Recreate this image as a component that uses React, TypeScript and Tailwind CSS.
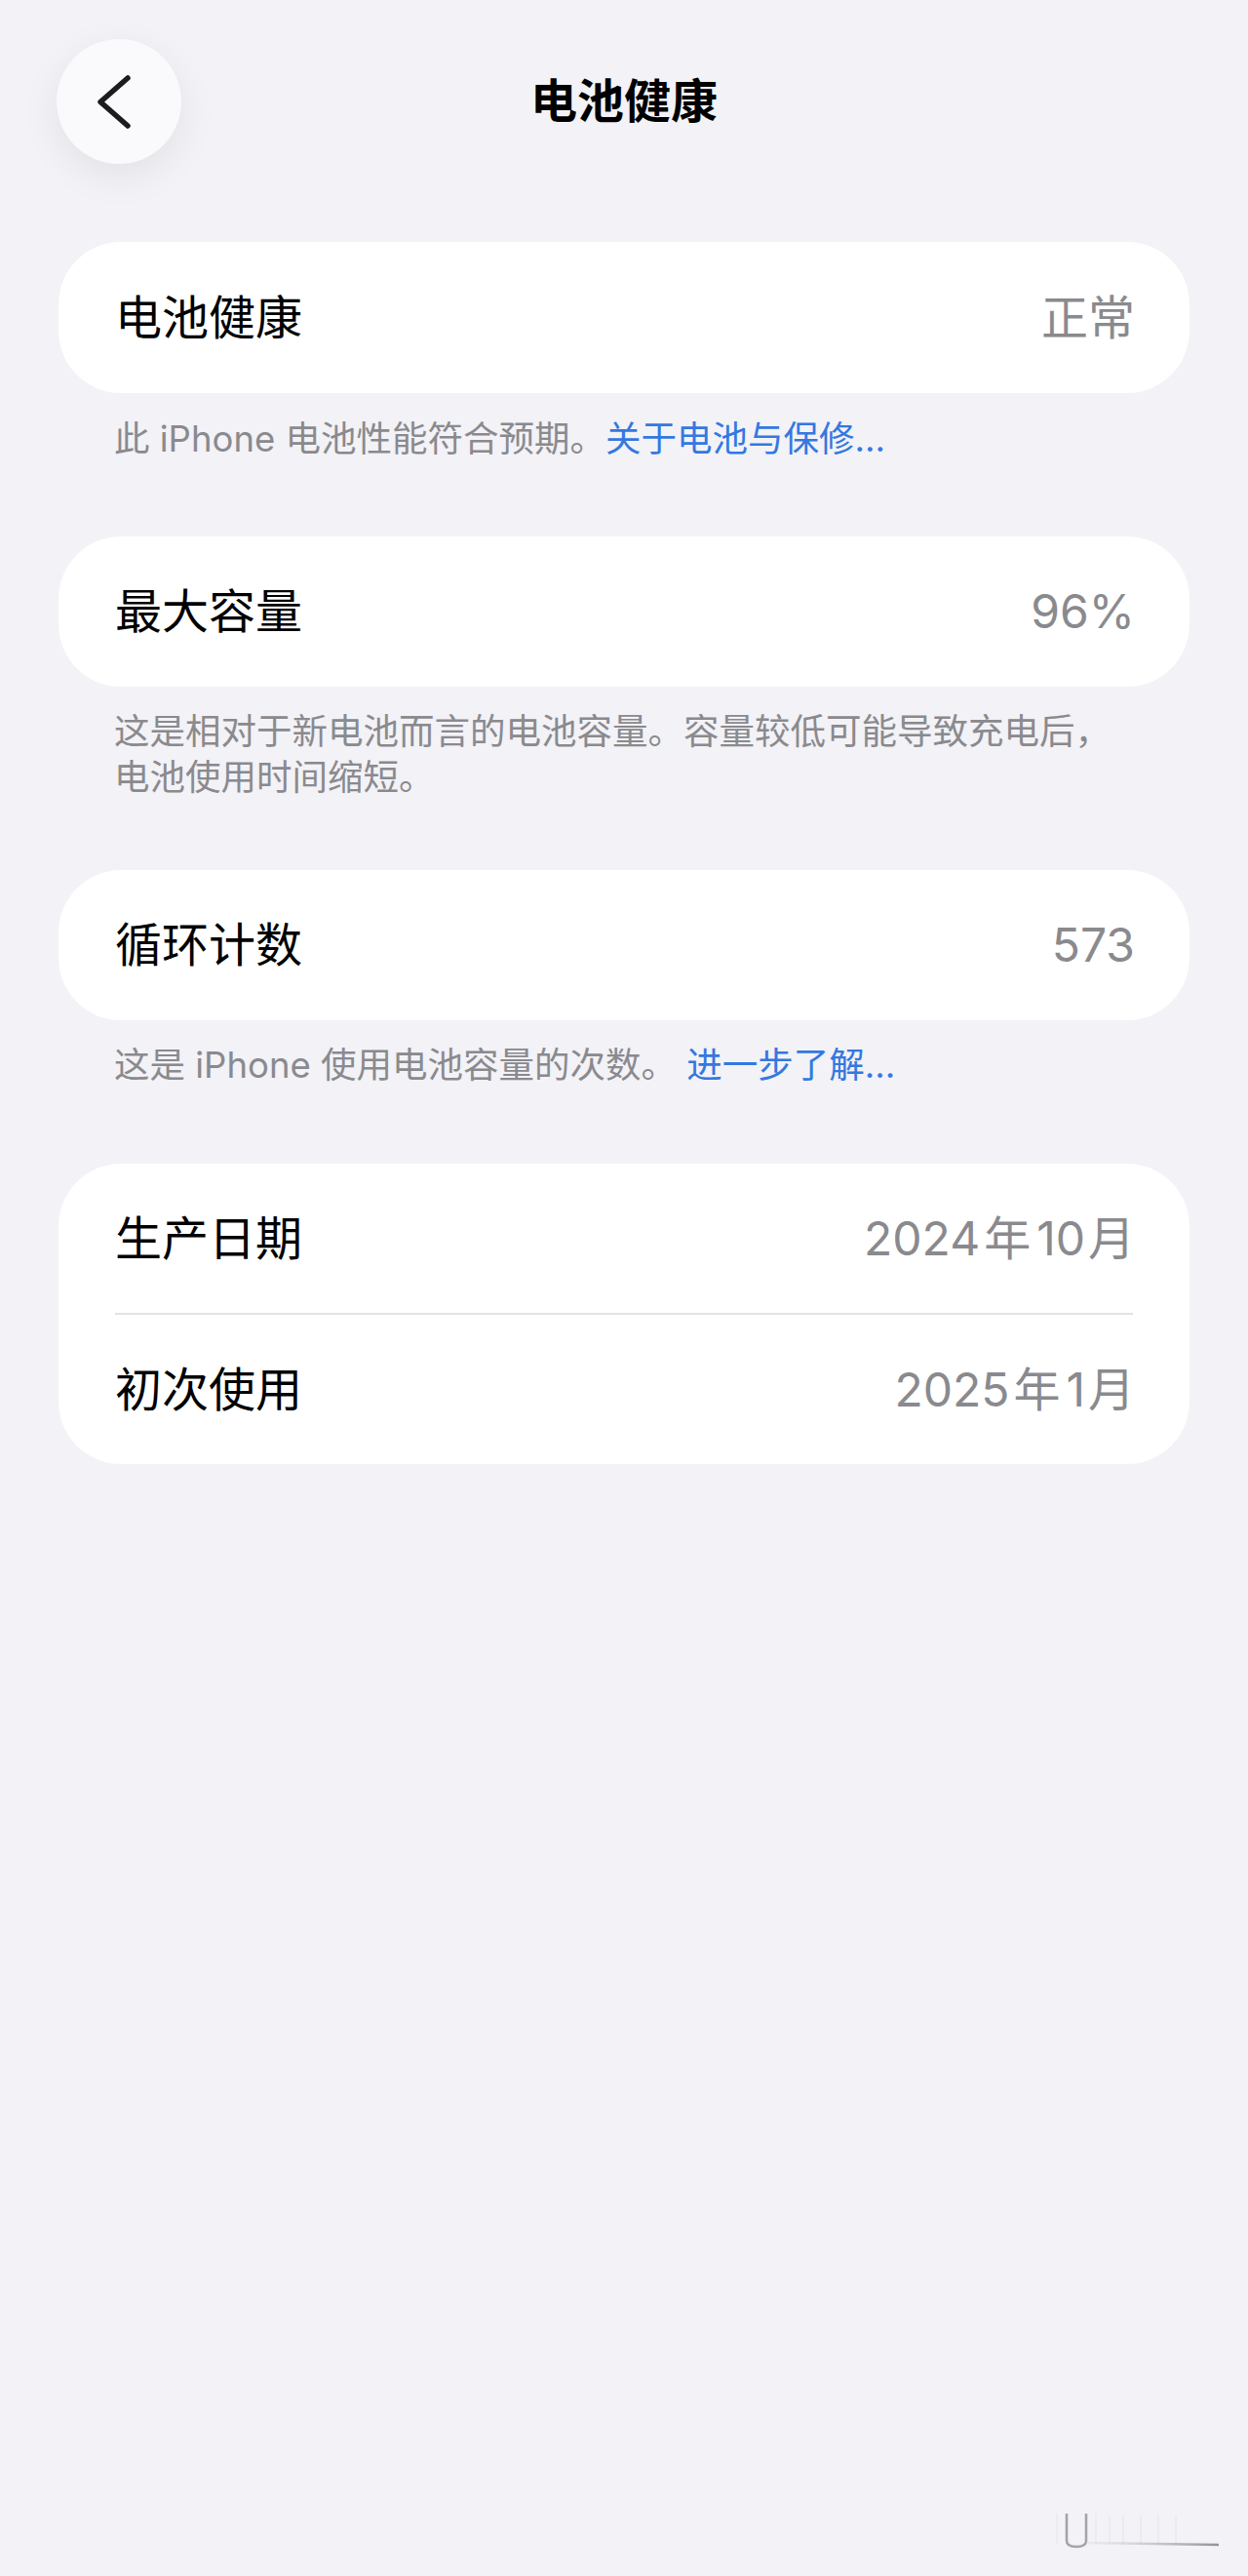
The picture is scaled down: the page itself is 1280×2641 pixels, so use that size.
import React from "react";

const FONT = {
  fontFamily: 'Inter, "Noto Sans CJK SC", "Noto Sans", sans-serif',
};

function Row({ label, value }: { label: string; value: React.ReactNode }) {
  return (
    <div className="flex h-full items-center justify-between pl-[58px] pr-[56px]">
      <span className="text-[48px] leading-none text-black">{label}</span>
      <span className="text-[48px] leading-none text-[#8a8a8e]">{value}</span>
    </div>
  );
}

export default function App() {
  return (
    <div
      className="relative min-h-[2641px] w-[1280px] bg-[#f2f2f7] pt-[40px] antialiased"
      style={FONT}
    >
      {/* Header */}
      <div className="grid h-[128px] grid-cols-[1fr_auto_1fr] items-center px-[58px]">
        <div className="flex">
          <button className="flex h-[128px] w-[128px] items-center justify-center rounded-full bg-[#fafafc] shadow-[0_12px_40px_rgba(0,0,0,0.07)]">
            <svg width="128" height="128" viewBox="0 0 128 128" fill="none">
              <path
                d="M73 40 L45 64.5 L73 89"
                stroke="#1c1c1e"
                strokeWidth="5.5"
                strokeLinecap="round"
                strokeLinejoin="round"
              />
            </svg>
          </button>
        </div>
        <h1 className="text-[48px] font-semibold leading-none text-black">电池健康</h1>
        <div />
      </div>

      {/* Card 1 */}
      <div className="mx-[60px] mt-[80px] h-[155px] rounded-[64px] bg-white">
        <Row label="电池健康" value="正常" />
      </div>
      <p className="pl-[117px] pr-[120px] pt-[24px] text-[36.5px] leading-[47px] text-[#8a8a8e]">
        此 iPhone 电池性能符合预期。<span className="text-[#3478e0]">关于电池与保修...</span>
      </p>

      {/* Card 2 */}
      <div className="mx-[60px] mt-[76px] h-[154px] rounded-[64px] bg-white">
        <Row label="最大容量" value="96%" />
      </div>
      <p className="pl-[117px] pr-[120px] pt-[23px] text-[36.5px] leading-[47px] text-[#8a8a8e]">
        这是相对于新电池而言的电池容量。容量较低可能导致充电后，电池使用时间缩短。
      </p>

      {/* Card 3 */}
      <div className="mx-[60px] mt-[71px] h-[154px] rounded-[64px] bg-white">
        <Row label="循环计数" value="573" />
      </div>
      <p className="pl-[117px] pr-[120px] pt-[23px] text-[36.5px] leading-[47px] text-[#8a8a8e]">
        这是 iPhone 使用电池容量的次数。 <span className="text-[#3478e0]">进一步了解...</span>
      </p>

      {/* Card 4 */}
      <div className="mx-[60px] mt-[77px] flex flex-col rounded-[64px] bg-white">
        <div className="h-[153px]">
          <Row
            label="生产日期"
            value={
              <>
                2024<span className="ml-[4px] mr-[6px]">年</span>10<span className="ml-[3px]">月</span>
              </>
            }
          />
        </div>
        <div className="mx-[58px] h-[2px] bg-[#e3e3e6]" />
        <div className="h-[153px]">
          <Row
            label="初次使用"
            value={
              <>
                2025<span className="ml-[4px] mr-[6px]">年</span>1<span className="ml-[3px]">月</span>
              </>
            }
          />
        </div>
      </div>

      {/* Watermark */}
      <svg
        className="absolute left-[1080px] top-[2565px]"
        width="180"
        height="55"
        viewBox="0 0 180 55"
        fill="none"
      >
        <defs>
          <linearGradient id="wl" x1="0" x2="1" y1="0" y2="0">
            <stop offset="0" stopColor="#d0d0d4" stopOpacity="0.25" />
            <stop offset="1" stopColor="#6a6a70" stopOpacity="0.7" />
          </linearGradient>
        </defs>
        <path
          d="M14 12 V40 Q14 46 24 46 Q34 46 34 40 V12"
          stroke="#444"
          strokeOpacity="0.45"
          strokeWidth="2.5"
          fill="none"
        />
        <g stroke="#e0e0e4" strokeOpacity="0.35" strokeWidth="2">
          <line x1="4" y1="12" x2="4" y2="44" />
          <line x1="44" y1="12" x2="44" y2="44" />
          <line x1="58" y1="14" x2="58" y2="44" />
          <line x1="72" y1="14" x2="72" y2="44" />
          <line x1="90" y1="14" x2="90" y2="44" />
          <line x1="108" y1="14" x2="108" y2="44" />
          <line x1="126" y1="14" x2="126" y2="44" />
        </g>
        <line x1="36" y1="42" x2="170" y2="44" stroke="url(#wl)" strokeWidth="2.5" />
      </svg>
    </div>
  );
}
